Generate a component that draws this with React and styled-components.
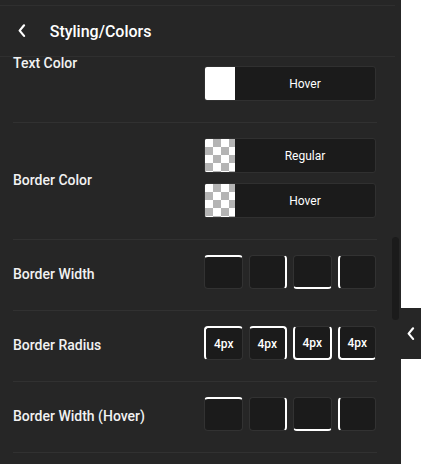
import styled, { createGlobalStyle, css } from "styled-components";

const GlobalStyle = createGlobalStyle`
  html, body {
    margin: 0;
    padding: 0;
    background: #ffffff;
  }
  body {
    font-family: Roboto, "Liberation Sans", sans-serif;
  }
`;

const Panel = styled.div`
  position: relative;
  width: 401px;
  height: 464px;
  background-color: #262626;
  padding-top: 5px;
  box-sizing: border-box;
  display: flex;
  flex-direction: column;
`;

const Header = styled.div`
  width: 395px;
  height: 52px;
  flex-shrink: 0;
  display: flex;
  align-items: center;
  gap: 24px;
  padding-left: 18px;
  box-sizing: border-box;
  border-top: 1px solid #2f2f2f;
  border-bottom: 1px solid #2f2f2f;
  color: #ffffff;
  font-size: 16px;
  font-weight: 500;
`;

const Body = styled.div`
  flex: 1;
  overflow: hidden;
`;

const Scrolled = styled.div`
  margin-top: -51px;
  padding: 0 24px 0 13px;
`;

const Row = styled.div`
  display: flex;
  align-items: center;
  justify-content: space-between;
  padding: 15px 1px 21px 0;
  border-bottom: 1px solid #313131;
`;

const Label = styled.span`
  color: #f2f2f2;
  font-size: 14px;
  font-weight: 500;
  padding-top: 3px;
`;

const SwatchStack = styled.div`
  width: 172px;
  display: flex;
  flex-direction: column;
  gap: 10px;
`;

const Swatch = styled.div`
  height: 35px;
  display: flex;
  background-color: #1b1b1b;
  border: 1px solid #303030;
  border-radius: 3px;
  box-sizing: border-box;
  overflow: hidden;
`;

const Chip = styled.div`
  width: 30px;
  flex-shrink: 0;
  ${({ $transparent }) =>
    $transparent
      ? css`
          background-color: #ffffff;
          background-image: conic-gradient(
            #b4b4b4 0 25%,
            #ffffff 0 50%,
            #b4b4b4 0 75%,
            #ffffff 0
          );
          background-size: 16px 16px;
        `
      : css`
          background-color: ${({ $color }) => $color};
        `}
`;

const SwatchText = styled.span`
  flex: 1;
  display: flex;
  align-items: center;
  justify-content: center;
  color: #ffffff;
  font-size: 12px;
`;

const BoxGrid = styled.div`
  width: 172px;
  display: grid;
  grid-template-columns: repeat(4, 1fr);
  gap: 6px;
`;

const edgeStyle = {
  top: css`border-top: 2px solid #ffffff;`,
  right: css`border-right: 2px solid #ffffff;`,
  bottom: css`border-bottom: 2px solid #ffffff;`,
  left: css`border-left: 2px solid #ffffff;`,
};

const Box = styled.div`
  height: 34px;
  box-sizing: border-box;
  background-color: #1b1b1b;
  border: 1px solid #323232;
  border-radius: 4px;
  display: flex;
  align-items: center;
  justify-content: center;
  color: #ffffff;
  font-size: 12px;
  font-weight: 500;
  ${({ $edges }) => $edges.map((e) => edgeStyle[e])}
`;

const ScrollThumb = styled.div`
  position: absolute;
  left: 392px;
  top: 237px;
  width: 7px;
  height: 83px;
  border-radius: 4px;
  background-color: #1b1b1b;
`;

const SideTab = styled.div`
  position: absolute;
  left: 401px;
  top: 308px;
  width: 20px;
  height: 51px;
  background-color: #262626;
  display: flex;
  align-items: center;
  justify-content: center;
`;

function Chevron({ size = 10 }) {
  return (
    <svg width={size * 0.7} height={size * 1.2} viewBox="0 0 7 12">
      <path
        d="M5.5 1.2 L1.5 6 L5.5 10.8"
        fill="none"
        stroke="#ffffff"
        strokeWidth="2"
        strokeLinecap="round"
        strokeLinejoin="round"
      />
    </svg>
  );
}

const colorRows = [
  {
    label: "Text Color",
    swatches: [
      { text: "Regular", color: "#ffffff" },
      { text: "Hover", color: "#ffffff" },
    ],
  },
  {
    label: "Border Color",
    swatches: [
      { text: "Regular", transparent: true },
      { text: "Hover", transparent: true },
    ],
  },
];

const sideEdges = [["top"], ["right"], ["bottom"], ["left"]];
const cornerEdges = [
  ["top", "left"],
  ["top", "right"],
  ["bottom", "left", "right"],
  ["bottom", "left"],
];

export default function App() {
  return (
    <>
      <GlobalStyle />
      <Panel>
        <Header>
          <Chevron size={11} />
          Styling/Colors
        </Header>
        <Body>
          <Scrolled>
            {colorRows.map((row) => (
              <Row key={row.label}>
                <Label>{row.label}</Label>
                <SwatchStack>
                  {row.swatches.map((s) => (
                    <Swatch key={s.text}>
                      <Chip $color={s.color} $transparent={s.transparent} />
                      <SwatchText>{s.text}</SwatchText>
                    </Swatch>
                  ))}
                </SwatchStack>
              </Row>
            ))}
            <Row>
              <Label>Border Width</Label>
              <BoxGrid>
                {sideEdges.map((e, i) => (
                  <Box key={i} $edges={e} />
                ))}
              </BoxGrid>
            </Row>
            <Row>
              <Label>Border Radius</Label>
              <BoxGrid>
                {cornerEdges.map((e, i) => (
                  <Box key={i} $edges={e}>
                    4px
                  </Box>
                ))}
              </BoxGrid>
            </Row>
            <Row>
              <Label>Border Width (Hover)</Label>
              <BoxGrid>
                {sideEdges.map((e, i) => (
                  <Box key={i} $edges={e} />
                ))}
              </BoxGrid>
            </Row>
          </Scrolled>
        </Body>
        <ScrollThumb />
        <SideTab>
          <Chevron size={11} />
        </SideTab>
      </Panel>
    </>
  );
}
